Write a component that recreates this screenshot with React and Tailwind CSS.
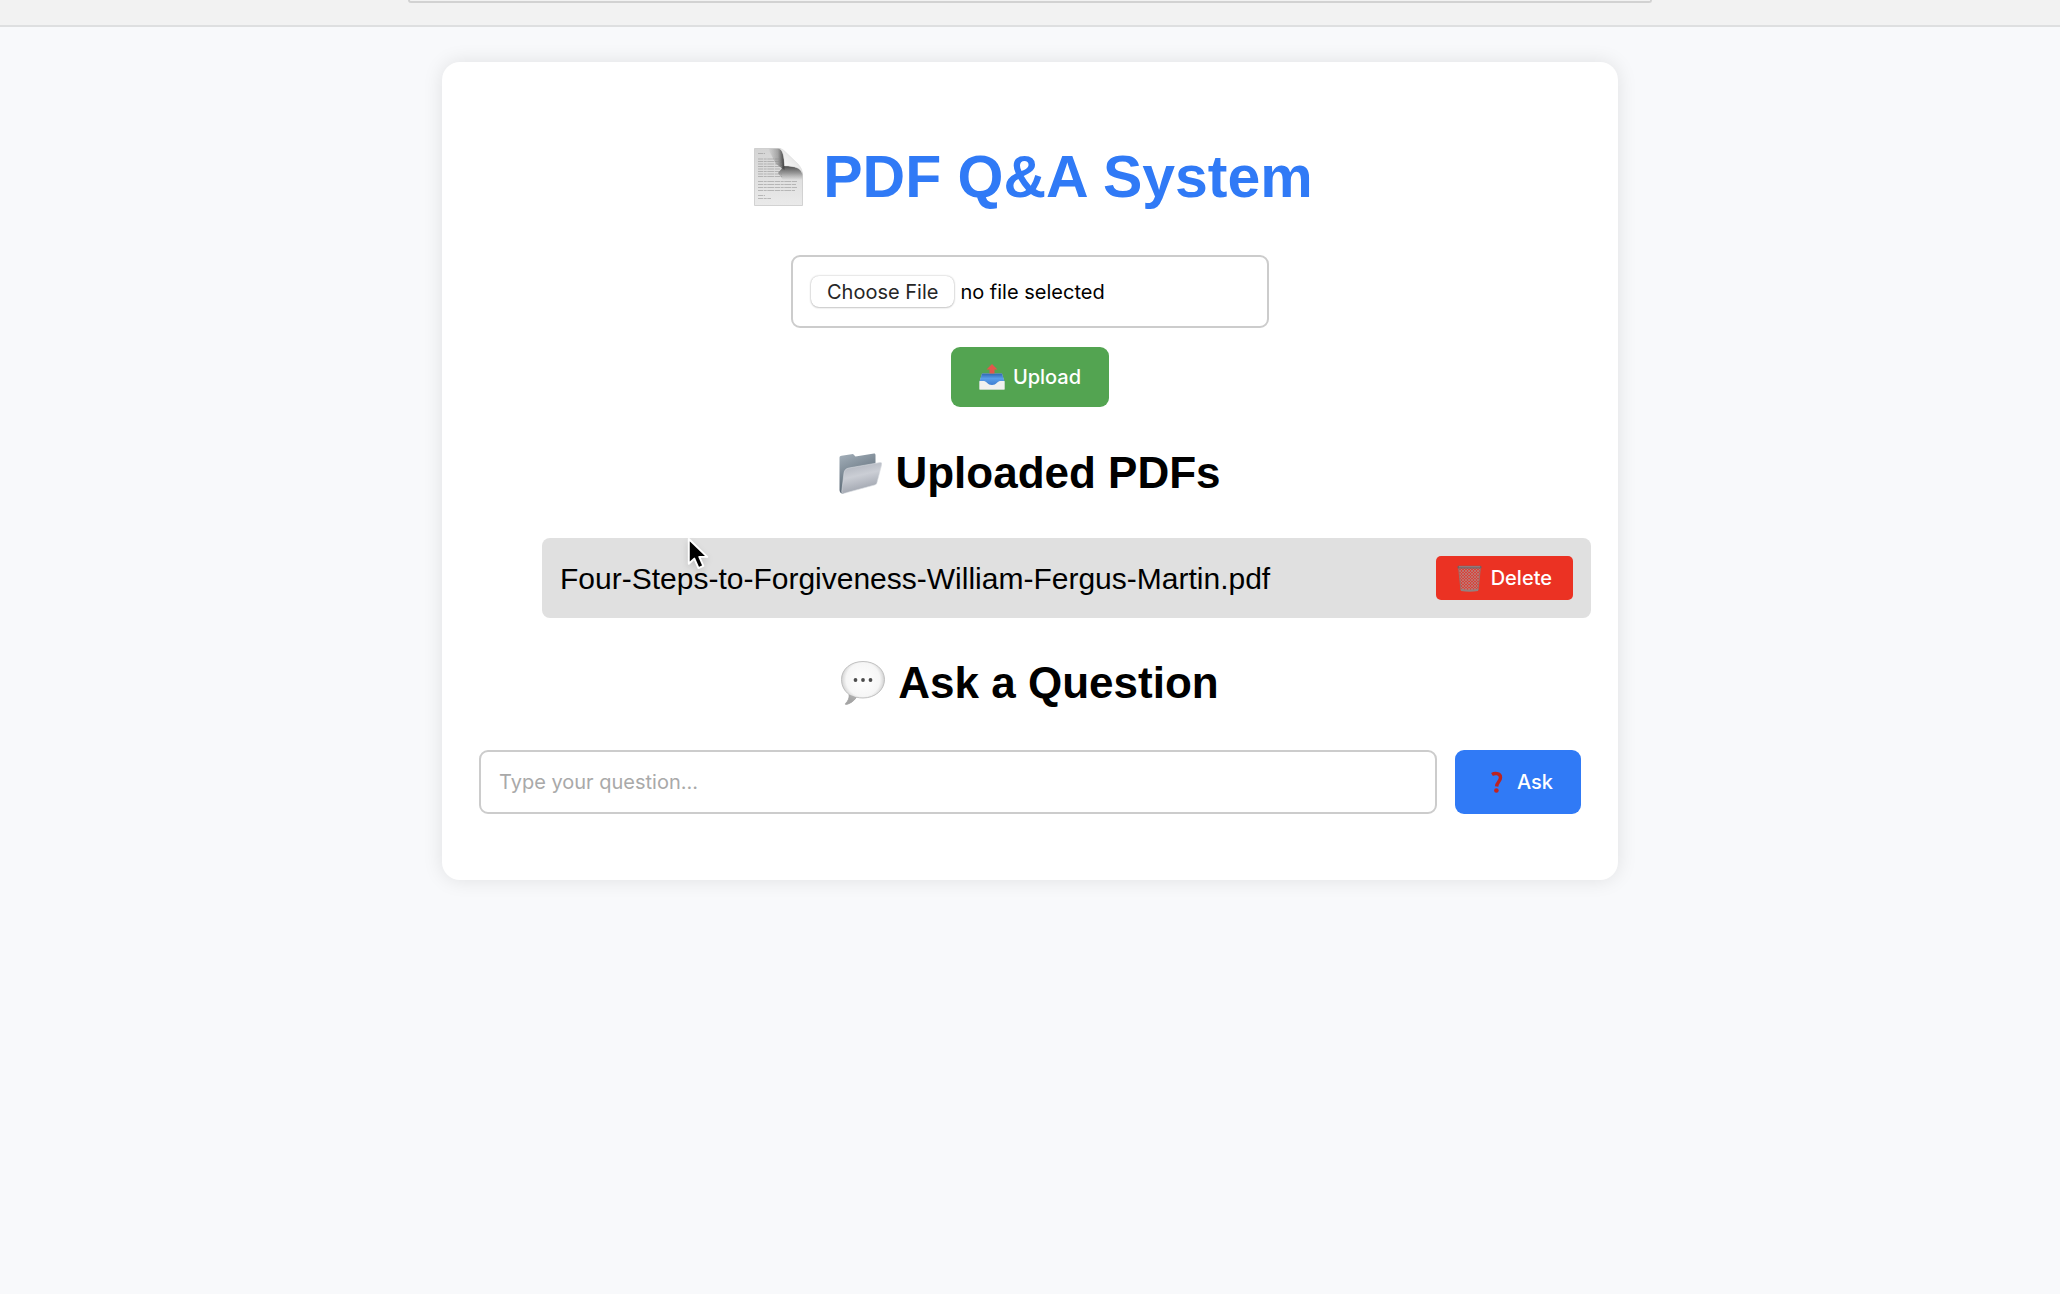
import React, { useState } from 'react';

const PageIcon = () => (
  <svg className="w-[49px] h-[58px] shrink-0" viewBox="0 0 49 58" aria-hidden="true">
    <defs>
      <linearGradient id="pageFill" x1="0" y1="0" x2="0" y2="1">
        <stop offset="0" stopColor="#d4d4d4" />
        <stop offset="1" stopColor="#eaeaea" />
      </linearGradient>
      <linearGradient id="pageCurl" x1="0" y1="1" x2="0.7" y2="0.3">
        <stop offset="0" stopColor="#c8c8c8" />
        <stop offset="0.4" stopColor="#f8f8f8" />
        <stop offset="1" stopColor="#e2e2e2" />
      </linearGradient>
      <linearGradient id="pageShade" x1="0" y1="0" x2="1" y2="0">
        <stop offset="0" stopColor="#555" stopOpacity="0" />
        <stop offset="0.6" stopColor="#444" stopOpacity="0.35" />
        <stop offset="1" stopColor="#333" stopOpacity="0.95" />
      </linearGradient>
      <linearGradient id="pageFold" x1="0" y1="0" x2="0" y2="1">
        <stop offset="0" stopColor="#444" stopOpacity="0.95" />
        <stop offset="0.5" stopColor="#666" stopOpacity="0.6" />
        <stop offset="1" stopColor="#777" stopOpacity="0" />
      </linearGradient>
    </defs>
    <path d="M0.500 0.500H25C29 1 30 6 30.500 18C41 18 47 20 48.500 26V57.500H0.500Z" fill="url(#pageFill)" stroke="#c9c9c9" strokeWidth="0.8" />
    <path d="M14 0.800H24C28 1 30 6 30.500 18V22L22 16Z" fill="url(#pageShade)" />
    <path d="M30 18C41 18 47 20 48.300 26V32H29L24 25Z" fill="url(#pageFold)" />
    <path d="M25 0.500C29 2 30 8 30.500 18C41 18 47 20 48.500 26C48.300 22 47 19.500 44 16L31 3.500C29 1.500 27.500 0.500 25 0.500Z" fill="url(#pageCurl)" stroke="#cfcfcf" strokeWidth="0.4" />
    <g stroke="#8c8c8c" strokeWidth="0.8" strokeDasharray="5 0.7 3 0.6 7 0.7" opacity="0.65">
      <path d="M4 5.500H11M4 11H27M4 13.500H27M4 16H28M4 18.500H28M4 21H28M4 23.500H28M4 26H28M4 28.500H28" />
      <path d="M4 33.500H43M4 36.500H42M4 39.500H43M4 42.500H41M4 47.500H11M4 50.500H17" />
    </g>
  </svg>
);

const OutboxIcon = () => (
  <svg className="w-[26px] h-[26px] shrink-0" viewBox="0 0 26 26" aria-hidden="true">
    <defs>
      <linearGradient id="trayBlue" x1="0" y1="0" x2="0" y2="1">
        <stop offset="0" stopColor="#2e67b0" />
        <stop offset="0.4" stopColor="#5a9ee8" />
        <stop offset="1" stopColor="#3b7bd0" />
      </linearGradient>
    </defs>
    <path d="M3 9.500H23L25.500 18V25.500H0.500V18Z" fill="#c9cfd4" />
    <path d="M3 9.500H23L25.500 17.500C21 17.500 19.500 18.500 18 20C15.500 22.500 10.500 22.500 8 20C6.500 18.500 5 17.500 0.500 17.500Z" fill="url(#trayBlue)" />
    <path d="M0.500 17H5C7.500 17 8.500 21 13 21S18.500 17 21 17H25.500V25.500H0.500Z" fill="#f1f1ef" />
    <path d="M13 0L18.500 5.500H15.500V9.500H10.500V5.500H7.500Z" fill="#e2574b" />
  </svg>
);

const FolderIcon = () => (
  <svg className="w-[43px] h-[41px] shrink-0" viewBox="0 0 43 41" aria-hidden="true">
    <defs>
      <linearGradient id="folderBack" x1="0" y1="0" x2="0.4" y2="1">
        <stop offset="0" stopColor="#a5b1bb" />
        <stop offset="1" stopColor="#52606d" />
      </linearGradient>
      <linearGradient id="folderFront" x1="0" y1="0" x2="0.3" y2="1">
        <stop offset="0" stopColor="#a9aeb8" />
        <stop offset="0.5" stopColor="#cbced5" />
        <stop offset="1" stopColor="#9fa4ae" />
      </linearGradient>
    </defs>
    <path d="M0.500 5C0.500 3.500 1 3 2.500 2.700L14 1L16.500 3.500L35 0.500C36 0.400 36.500 1 36.500 2V28L4 40.500C2 41 0.500 39 0.500 37Z" fill="url(#folderBack)" />
    <path d="M5 20C5.500 17 7 15.500 10 15L41 9.500C42.500 9.300 43 10 42.700 11.500L38 29.500C37.700 31 37 31.500 35.500 32L5 40.300C3.500 40.700 2.500 40 2.800 38Z" fill="url(#folderFront)" stroke="#d9dce1" strokeWidth="0.6" />
  </svg>
);

const TrashIcon = () => (
  <svg className="w-[25px] h-[27px] shrink-0" viewBox="0 0 25 27" aria-hidden="true">
    <defs>
      <pattern id="mesh" width="3" height="3" patternUnits="userSpaceOnUse">
        <path d="M0 0L3 3M3 0L0 3" stroke="#b08f8d" strokeWidth="0.6" />
      </pattern>
    </defs>
    <path d="M1.500 2H23.500L21 25.500H4Z" fill="#d8423a" />
    <path d="M1.500 2H23.500L21 25.500H4Z" fill="url(#mesh)" stroke="#9a6f6b" strokeWidth="0.9" />
    <path d="M3.800 23.800Q12.500 25.500 21.200 23.800L21 26Q12.500 27.300 4 26Z" fill="#94807f" />
    <rect x="0.500" y="0.800" width="24" height="2.800" rx="1.400" fill="#775f61" />
    <path d="M2 1.800H23" stroke="#b5a1a1" strokeWidth="0.6" />
  </svg>
);

const SpeechIcon = () => (
  <svg className="w-[44px] h-[44px] shrink-0" viewBox="0 0 44 44" aria-hidden="true">
    <defs>
      <radialGradient id="bubble" cx="0.5" cy="0.42" r="0.56">
        <stop offset="0" stopColor="#fff" />
        <stop offset="0.7" stopColor="#f6f6f6" />
        <stop offset="1" stopColor="#bdbdbd" />
      </radialGradient>
    </defs>
    <path d="M22 0.500C34 0.500 43.500 8 43.500 18.500S34 37 22 37C19.500 37 17.500 36.800 15.500 36.200C13 40 9 43 5 43.500C4 43.500 4 42.800 4.700 42.300C7 40 8.500 37 8 33.500C3.500 30 0.500 25 0.500 18.500C0.500 8 10 0.500 22 0.500Z" fill="url(#bubble)" stroke="#b5b5b5" strokeWidth="0.8" />
    <path d="M8 33.500C8.500 37 7 40 4.700 42.300C4 42.800 4 43.500 5 43.500C9 43 13 40 15.500 36.200Z" fill="#9a9a9a" opacity="0.7" />
    <g fill="#4c4c4c">
      <circle cx="14.500" cy="19" r="1.900" />
      <circle cx="22" cy="19" r="1.900" />
      <circle cx="29.500" cy="19" r="1.900" />
    </g>
  </svg>
);

const QuestionIcon = () => (
  <svg className="w-[26px] h-[26px] shrink-0" viewBox="0 0 26 26" aria-hidden="true">
    <path d="M9 5.500C11 4.300 17.500 3.500 17.500 8.500C17.500 12.500 14 13 13.600 17.500" fill="none" stroke="#bd2320" strokeWidth="3.4" />
    <circle cx="13.400" cy="21.500" r="2.300" fill="#c4231f" />
  </svg>
);

const Pointer = () => (
  <svg className="absolute left-[145px] -top-px w-[23px] h-[33px] drop-shadow-md pointer-events-none" viewBox="0 0 23 34" aria-hidden="true">
    <path d="M1.500 2V27.500L7.200 22.300L11.500 32L16.500 29.800L12.300 20.500H20.500Z" fill="#000" stroke="#fff" strokeWidth="2" strokeLinejoin="round" />
  </svg>
);

const App = () => {
  const [file, setFile] = useState(null);
  const [question, setQuestion] = useState("");
  const [pdfs, setPdfs] = useState(["Four-Steps-to-Forgiveness-William-Fergus-Martin.pdf"]);

  const handleUpload = () => {
    if (!file) return;
    setPdfs((prev) => [...prev, file.name]);
    setFile(null);
  };

  const handleDelete = (name) => {
    setPdfs((prev) => prev.filter((pdf) => pdf !== name));
  };

  return (
    <div className="min-h-screen bg-[#f8f9fb] font-['Liberation_Sans',Arial,sans-serif] text-black">
      {/* Bottom edge of the browser toolbar */}
      <div className="h-[27px] px-[408px] bg-[#f2f2f2] border-b-2 border-[#dedfe0]">
        <div className="h-[3px] border-b-2 border-x-2 border-[#d2d2d2] rounded-b-xl" />
      </div>

      <main className="mt-[35px] mx-auto w-full max-w-[1176px] px-[37px] pt-[81px] pb-[66px] bg-white rounded-[18px] shadow-[0_0_20px_rgba(0,0,0,0.1)]">
        <h1 className="pl-[7px] flex items-center justify-center gap-[20px] text-[59px] leading-[68px] font-bold text-[#307af6]">
          <PageIcon />
          PDF Q&amp;A System
        </h1>

        <div className="mt-[44px] flex flex-col items-center gap-[19px] font-[Inter,sans-serif] text-[20px]">
          <label className="w-full max-w-[478px] h-[73px] px-[18px] flex items-center gap-[6px] border-2 border-[#cccccc] rounded-[9px]">
            <input
              type="file"
              accept="application/pdf"
              className="sr-only"
              onChange={(e) => setFile(e.target.files[0])}
            />
            <span className="h-[31px] px-4 flex items-center rounded-lg text-[#262626] shadow-[0_0_2px_rgba(0,0,0,0.3),0_1px_2px_rgba(0,0,0,0.15)]">
              Choose File
            </span>
            <span>{file ? file.name : "no file selected"}</span>
          </label>
          <button
            onClick={handleUpload}
            className="h-[60px] px-[28px] flex items-center gap-[8px] bg-[#53a451] text-white font-medium rounded-[9px]"
          >
            <OutboxIcon />
            Upload
          </button>
        </div>

        <h2 className="mt-[41px] flex items-center justify-center gap-[13px] text-[44px] leading-[50px] font-bold">
          <FolderIcon />
          Uploaded PDFs
        </h2>

        <ul className="mt-[40px] ml-[63px] -mr-[10px]">
          {pdfs.map((pdf) => (
            <li
              key={pdf}
              className="relative h-[80px] px-[18px] flex items-center justify-between bg-[#e0e0e0] rounded-lg text-[30px]"
            >
              {pdf}
              <button
                onClick={() => handleDelete(pdf)}
                className="h-[44px] px-[21px] flex items-center gap-[9px] bg-[#eb3223] text-white font-[Inter,sans-serif] text-[20px] font-medium rounded-[5px]"
              >
                <TrashIcon />
                Delete
              </button>
              <Pointer />
            </li>
          ))}
        </ul>

        <h2 className="mt-[40px] flex items-center justify-center gap-[13px] text-[44px] leading-[50px] font-bold">
          <SpeechIcon />
          Ask a Question
        </h2>

        <div className="mt-[42px] flex gap-[18px] font-[Inter,sans-serif] text-[20px]">
          <input
            type="text"
            aria-label="Question"
            value={question}
            onChange={(e) => setQuestion(e.target.value)}
            placeholder="Type your question..."
            className="flex-1 h-[64px] px-[18px] border-2 border-[#cccccc] rounded-[9px] placeholder:text-[#a9a9a9]"
          />
          <button className="h-[64px] px-[28px] flex items-center gap-[8px] bg-[#307af6] text-white font-medium rounded-[9px]">
            <QuestionIcon />
            Ask
          </button>
        </div>
      </main>
    </div>
  );
};

export default App;
